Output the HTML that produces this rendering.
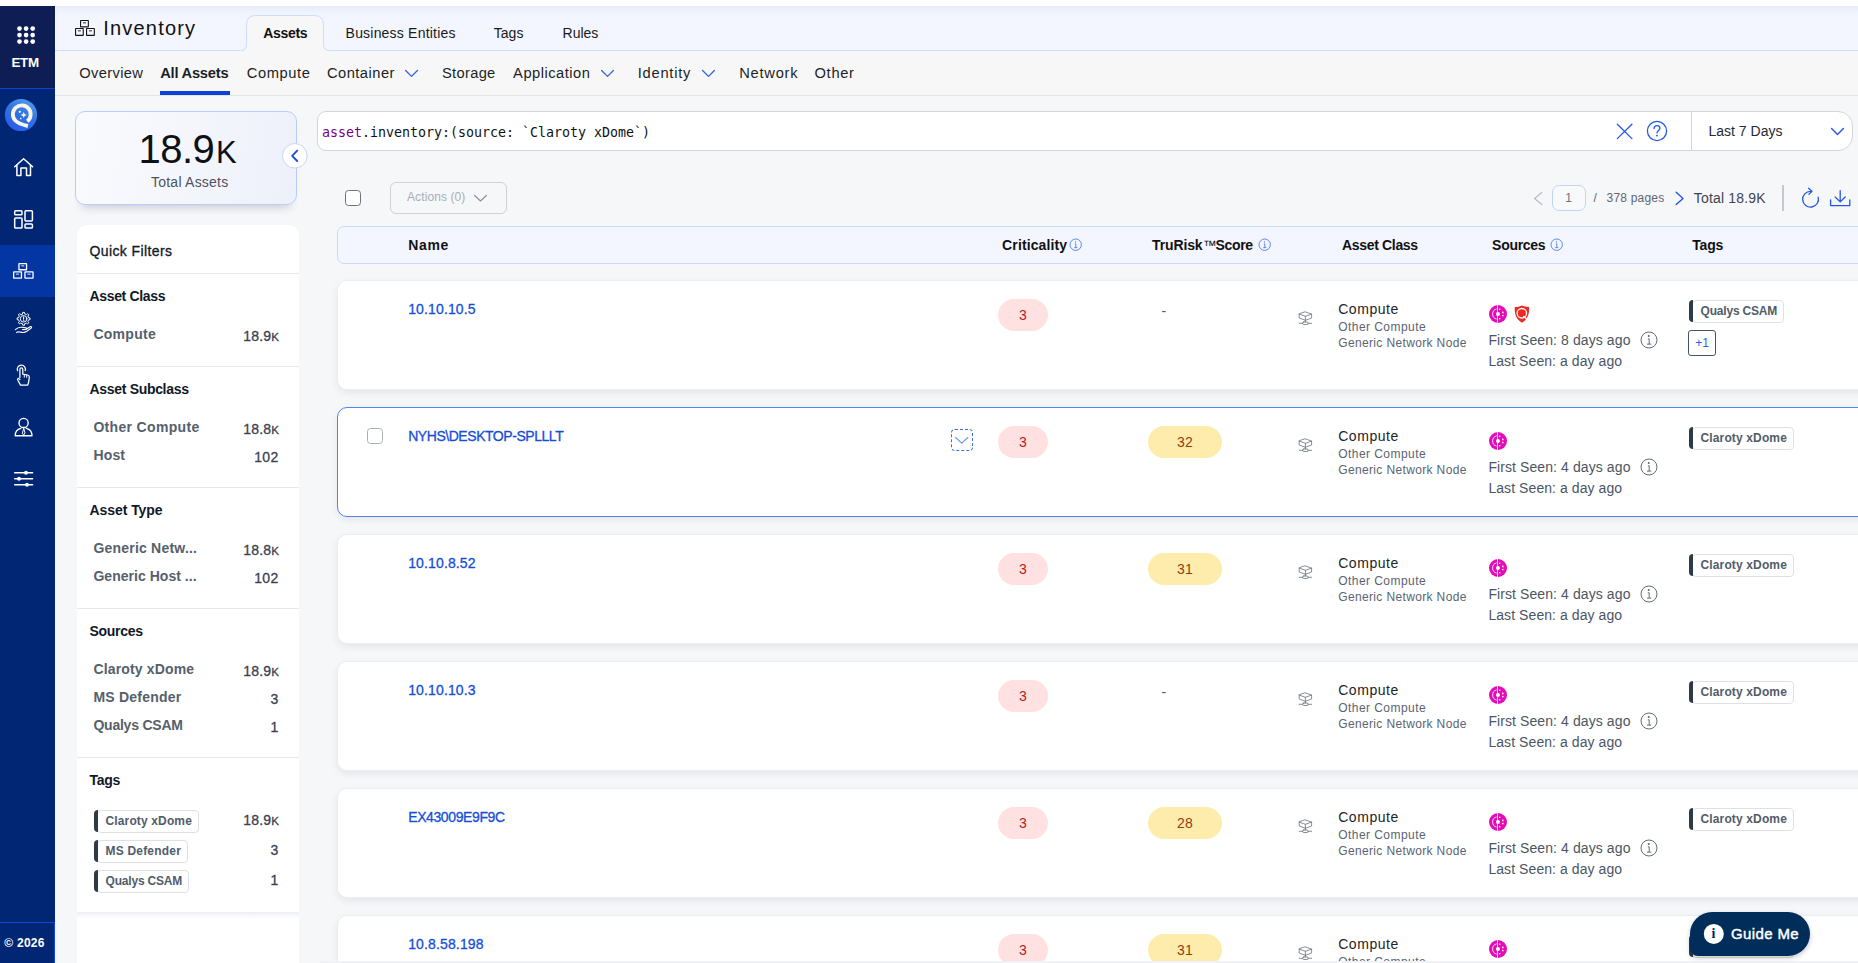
<!DOCTYPE html>
<html lang="en"><head><meta charset="utf-8"><title>Inventory - All Assets</title>
<style>
html,body{margin:0;padding:0}
body{width:1858px;height:963px;overflow:hidden;background:#f6f7f9;position:relative;font-family:'Liberation Sans', sans-serif}
#root{position:absolute;left:0;top:0;width:1858px;height:963px;overflow:hidden}
#root div,#root span,#root svg{box-sizing:border-box}
</style></head><body><div id="root">
<div style="position:absolute;left:0px;top:6px;width:55px;height:957px;background:#012674"></div>
<div style="position:absolute;left:0px;top:6px;width:55px;height:82px;background:#0e1e54"></div>
<div style="position:absolute;left:0px;top:88px;width:55px;height:1.1px;background:#0b42d4"></div>
<div style="position:absolute;left:0px;top:245px;width:55px;height:52px;background:#0335a3"></div>
<svg style="position:absolute;left:0px;top:0px;" width="55" height="60" viewBox="0 0 55 60" fill="none"><circle cx="19.5" cy="28.6" r="2.35" fill="#fff"/><circle cx="26.1" cy="28.6" r="2.35" fill="#fff"/><circle cx="32.7" cy="28.6" r="2.35" fill="#fff"/><circle cx="19.5" cy="35.1" r="2.35" fill="#fff"/><circle cx="26.1" cy="35.1" r="2.35" fill="#fff"/><circle cx="32.7" cy="35.1" r="2.35" fill="#fff"/><circle cx="19.5" cy="41.6" r="2.35" fill="#fff"/><circle cx="26.1" cy="41.6" r="2.35" fill="#fff"/><circle cx="32.7" cy="41.6" r="2.35" fill="#fff"/></svg>
<span style="position:absolute;left:11.43px;top:56.36px;font-family:'Liberation Sans', sans-serif;font-size:13.4px;line-height:13.4px;font-weight:700;color:#fff;letter-spacing:-0.245px;white-space:pre;">ETM</span>
<svg style="position:absolute;left:0px;top:95px;" width="55" height="40" viewBox="0 0 55 40" fill="none"><defs><linearGradient id="lg" x1="0.8" y1="0.05" x2="0.3" y2="1"><stop offset="0" stop-color="#4c9bf0"/><stop offset="0.45" stop-color="#3273e4"/><stop offset="1" stop-color="#2a5be9"/></linearGradient></defs><circle cx="21" cy="20" r="16.1" fill="url(#lg)"/><path d="M27.2 26.3 A8.9 8.9 0 1 0 15.4 25.5 C18.6 28.9 23.4 30.0 27.9 31.0" stroke="#f8f5e6" stroke-width="3.85" stroke-linecap="butt" fill="none"/><path d="M23.7 16.9 L24.6 19.1 L26.8 20 L24.6 20.9 L23.7 23.1 L22.8 20.9 L20.6 20 L22.8 19.1 Z" fill="#f8f5e6"/><circle cx="19.8" cy="16.8" r="1.15" fill="#f8f5e6"/><circle cx="20.7" cy="23.5" r="0.85" fill="#f8f5e6"/></svg>
<svg style="position:absolute;left:10px;top:154px;" width="30" height="26" viewBox="0 0 30 26" fill="none"><g stroke="#fff" stroke-width="1.5" stroke-linecap="round" stroke-linejoin="round"><path d="M4.7 12.7 L13.6 4.7 L22.6 12.7"/><path d="M6.9 11.2 V21.5 H10.9 V14.1 H16.5 V21.5 H20.5 V11.2"/></g></svg>
<svg style="position:absolute;left:10px;top:206px;" width="30" height="26" viewBox="0 0 30 26" fill="none"><g stroke="#fff" stroke-width="1.5"><rect x="4.7" y="4.8" width="7.3" height="4.0" rx="0.9"/><rect x="4.7" y="11.9" width="7.3" height="10.2" rx="0.9"/><rect x="15.0" y="4.8" width="7.4" height="10.2" rx="0.9"/><rect x="15.0" y="18.0" width="7.4" height="4.1" rx="0.9"/></g></svg>
<svg style="position:absolute;left:11.9px;top:262.0px;" width="24" height="19" viewBox="0 0 24 19" fill="none"><rect x="6.95" y="1.65" width="7.60" height="6.10" rx="0.3" stroke="#fff" stroke-width="1.3"/><path d="M9.25 3.85 h3.0" stroke="#fff" stroke-width="0.9"/><rect x="1.65" y="9.95" width="7.80" height="6.10" rx="0.3" stroke="#fff" stroke-width="1.3"/><path d="M4.05 12.15 h3.0" stroke="#fff" stroke-width="0.9"/><rect x="12.95" y="9.95" width="8.10" height="6.10" rx="0.3" stroke="#fff" stroke-width="1.3"/><path d="M15.50 12.15 h3.0" stroke="#fff" stroke-width="0.9"/></svg>
<svg style="position:absolute;left:10px;top:310px;" width="30" height="26" viewBox="0 0 30 26" fill="none"><g stroke="#fff" stroke-linecap="round" stroke-linejoin="round"><path d="M12.57 3.81 L12.73 2.36 L14.47 2.36 L14.63 3.81 L16.40 4.54 L17.54 3.63 L18.77 4.86 L17.86 6.00 L18.59 7.77 L20.04 7.93 L20.04 9.67 L18.59 9.83 L17.86 11.60 L18.77 12.74 L17.54 13.97 L16.40 13.06 L14.63 13.79 L14.47 15.24 L12.73 15.24 L12.57 13.79 L10.80 13.06 L9.66 13.97 L8.43 12.74 L9.34 11.60 L8.61 9.83 L7.16 9.67 L7.16 7.93 L8.61 7.77 L9.34 6.00 L8.43 4.86 L9.66 3.63 L10.80 4.54 Z" stroke-width="1.0"/><circle cx="13.6" cy="8.8" r="3.3" stroke-width="0.95"/><path d="M13.6 6.9 V9.3" stroke-width="1.1"/><circle cx="13.6" cy="10.8" r="0.3" stroke-width="0.6"/><path d="M5.4 19.6 C7.5 17.6 9.5 17.0 12.0 17.3 L16.0 17.9 C17.0 18.1 17.0 19.4 16.0 19.5 L12.6 19.6 M16.6 19.0 L20.4 16.6 C21.4 16.2 22.0 17.3 21.2 18.0 L16.4 21.6 C15.2 22.4 13.6 22.6 12.0 22.4 L8.2 21.8 L6.6 22.6" stroke-width="1.15"/></g></svg>
<svg style="position:absolute;left:10px;top:362px;" width="30" height="26" viewBox="0 0 30 26" fill="none"><g stroke="#fff" stroke-width="1.25" stroke-linecap="round" stroke-linejoin="round"><path d="M7.6 8.8 A4.1 4.1 0 1 1 15.2 8.6"/><path d="M9.9 15.6 V7.4 C9.9 5.5 12.8 5.5 12.8 7.4 V12.2 L17.6 13.0 C18.8 13.3 19.4 14.1 19.3 15.4 L18.6 20.2 C18.4 21.6 18.0 22.6 17.6 23.0 H10.4 C9.6 21.2 8.6 19.6 7.8 18.2 C7.1 16.8 8.4 15.8 9.2 16.8 L9.9 17.6"/><path d="M14.3 13.0 V15.2 M16.7 13.4 V15.4" stroke-width="1.0"/></g></svg>
<svg style="position:absolute;left:10px;top:414px;" width="30" height="26" viewBox="0 0 30 26" fill="none"><g stroke="#fff" stroke-width="1.35" stroke-linecap="round" stroke-linejoin="round"><circle cx="13.6" cy="8.9" r="4.6"/><path d="M5.2 21.7 C5.2 17.6 8.0 15.0 10.8 14.3 M16.4 14.3 C19.2 15.0 22.0 17.6 22.0 21.7 M5.2 21.7 H22.0"/><path d="M13.6 14.6 L12.4 19.2 L13.6 21.2 L14.8 19.2 Z" stroke-width="1.0"/></g></svg>
<svg style="position:absolute;left:10px;top:466px;" width="30" height="26" viewBox="0 0 30 26" fill="none"><g stroke="#fff" stroke-width="1.5" stroke-linecap="round"><path d="M4.7 6.7 H22.6 M4.7 12.7 H22.6 M4.7 18.7 H22.6"/></g><circle cx="16.0" cy="6.7" r="1.95" fill="#fff"/><circle cx="9.0" cy="12.7" r="1.95" fill="#fff"/><circle cx="17.0" cy="18.7" r="1.95" fill="#fff"/></svg>
<div style="position:absolute;left:0px;top:922px;width:55px;height:1px;background:#0b46e0"></div>
<div style="position:absolute;left:54px;top:922px;width:1px;height:41px;background:#0b46e0"></div>
<span style="position:absolute;left:4.20px;top:936.94px;font-family:'Liberation Sans', sans-serif;font-size:12px;line-height:12px;font-weight:700;color:#fff;letter-spacing:0.281px;white-space:pre;">© 2026</span>
<div style="position:absolute;left:55px;top:6px;width:1803px;height:45px;background:linear-gradient(to bottom,#e7ecf8 0,#f0f4fd 7px,#f3f6fe 14px,#f3f6fe 100%)"></div>
<div style="position:absolute;left:55px;top:51px;width:1803px;height:44.5px;background:#f7f7f8"></div>
<div style="position:absolute;left:55px;top:95px;width:1803px;height:1px;background:#e1e4e9"></div>
<svg style="position:absolute;left:55px;top:6px;" width="1803" height="50" viewBox="0 0 1803 50" fill="none"><path d="M0 44.5 H185.5 Q191.5 44.5 191.5 38.5 V19 Q191.5 9.5 201 9.5 H259 Q268.5 9.5 268.5 19 V38.5 Q268.5 44.5 274.5 44.5 H1803 V50 H0 Z" fill="#f7f7f8"/><path d="M0 44.5 H185.5 Q191.5 44.5 191.5 38.5 V19 Q191.5 9.5 201 9.5 H259 Q268.5 9.5 268.5 19 V38.5 Q268.5 44.5 274.5 44.5 H1803" stroke="#cfdcfc" stroke-width="1"/></svg>
<svg style="position:absolute;left:74.1px;top:19.0px;" width="24" height="19" viewBox="0 0 24 19" fill="none"><rect x="6.55" y="1.55" width="7.80" height="6.30" rx="0.3" stroke="#141414" stroke-width="1.1"/><path d="M8.95 3.85 h3.0" stroke="#141414" stroke-width="0.9"/><rect x="1.55" y="9.55" width="7.70" height="6.80" rx="0.3" stroke="#141414" stroke-width="1.1"/><path d="M3.90 11.85 h3.0" stroke="#141414" stroke-width="0.9"/><rect x="12.55" y="9.55" width="7.80" height="6.80" rx="0.3" stroke="#141414" stroke-width="1.1"/><path d="M14.95 11.85 h3.0" stroke="#141414" stroke-width="0.9"/></svg>
<span style="position:absolute;left:103.30px;top:17.97px;font-family:'Liberation Sans', sans-serif;font-size:20px;line-height:20px;font-weight:400;color:#111;letter-spacing:1.193px;white-space:pre;">Inventory</span>
<span style="position:absolute;left:263.20px;top:26.15px;font-family:'Liberation Sans', sans-serif;font-size:14px;line-height:14px;font-weight:700;color:#111;letter-spacing:-0.320px;white-space:pre;">Assets</span>
<span style="position:absolute;left:345.60px;top:26.25px;font-family:'Liberation Sans', sans-serif;font-size:14px;line-height:14px;font-weight:400;color:#1a1a1a;letter-spacing:0.202px;white-space:pre;">Business Entities</span>
<span style="position:absolute;left:493.70px;top:26.25px;font-family:'Liberation Sans', sans-serif;font-size:14px;line-height:14px;font-weight:400;color:#1a1a1a;letter-spacing:0.066px;white-space:pre;">Tags</span>
<span style="position:absolute;left:562.60px;top:26.25px;font-family:'Liberation Sans', sans-serif;font-size:14px;line-height:14px;font-weight:400;color:#1a1a1a;letter-spacing:-0.044px;white-space:pre;">Rules</span>
<span style="position:absolute;left:79.20px;top:65.56px;font-family:'Liberation Sans', sans-serif;font-size:14.7px;line-height:14.7px;font-weight:400;color:#1c1f24;letter-spacing:0.357px;white-space:pre;">Overview</span>
<span style="position:absolute;left:160.20px;top:65.56px;font-family:'Liberation Sans', sans-serif;font-size:14.7px;line-height:14.7px;font-weight:700;color:#1c1f24;letter-spacing:-0.233px;white-space:pre;">All Assets</span>
<span style="position:absolute;left:246.80px;top:65.56px;font-family:'Liberation Sans', sans-serif;font-size:14.7px;line-height:14.7px;font-weight:400;color:#1c1f24;letter-spacing:0.571px;white-space:pre;">Compute</span>
<span style="position:absolute;left:326.90px;top:65.56px;font-family:'Liberation Sans', sans-serif;font-size:14.7px;line-height:14.7px;font-weight:400;color:#1c1f24;letter-spacing:0.481px;white-space:pre;">Container</span>
<span style="position:absolute;left:442.00px;top:65.56px;font-family:'Liberation Sans', sans-serif;font-size:14.7px;line-height:14.7px;font-weight:400;color:#1c1f24;letter-spacing:0.306px;white-space:pre;">Storage</span>
<span style="position:absolute;left:513.10px;top:65.56px;font-family:'Liberation Sans', sans-serif;font-size:14.7px;line-height:14.7px;font-weight:400;color:#1c1f24;letter-spacing:0.501px;white-space:pre;">Application</span>
<span style="position:absolute;left:637.80px;top:65.56px;font-family:'Liberation Sans', sans-serif;font-size:14.7px;line-height:14.7px;font-weight:400;color:#1c1f24;letter-spacing:0.738px;white-space:pre;">Identity</span>
<span style="position:absolute;left:739.20px;top:65.56px;font-family:'Liberation Sans', sans-serif;font-size:14.7px;line-height:14.7px;font-weight:400;color:#1c1f24;letter-spacing:0.746px;white-space:pre;">Network</span>
<span style="position:absolute;left:814.50px;top:65.56px;font-family:'Liberation Sans', sans-serif;font-size:14.7px;line-height:14.7px;font-weight:400;color:#1c1f24;letter-spacing:0.694px;white-space:pre;">Other</span>
<svg style="position:absolute;left:404.8px;top:69px;" width="13" height="9" viewBox="0 0 13 9" fill="none"><path d="M0.6 1.5 L6.5 7.4 L12.4 1.5" stroke="#2f62e6" stroke-width="1.3" stroke-linecap="round" stroke-linejoin="round"/></svg>
<svg style="position:absolute;left:600.7px;top:69px;" width="13" height="9" viewBox="0 0 13 9" fill="none"><path d="M0.6 1.5 L6.5 7.4 L12.4 1.5" stroke="#2f62e6" stroke-width="1.3" stroke-linecap="round" stroke-linejoin="round"/></svg>
<svg style="position:absolute;left:701.6px;top:69px;" width="13" height="9" viewBox="0 0 13 9" fill="none"><path d="M0.6 1.5 L6.5 7.4 L12.4 1.5" stroke="#2f62e6" stroke-width="1.3" stroke-linecap="round" stroke-linejoin="round"/></svg>
<div style="position:absolute;left:160px;top:91px;width:70px;height:4px;background:#0b43d8"></div>
<div style="position:absolute;left:75.0px;top:111.0px;width:222px;height:93.8px;border:1px solid #b9cdfb;border-radius:10px;background:linear-gradient(100deg,#f9fafd 0%,#f4f6fc 50%,#edf0fa 100%);box-shadow:0 9px 10px -7px rgba(20,30,60,.22)"></div>
<span style="position:absolute;left:138.60px;top:129.44px;font-family:'Liberation Sans', sans-serif;font-size:40px;line-height:40px;font-weight:400;color:#0d1117;letter-spacing:-0.565px;white-space:pre;">18.9</span>
<span style="position:absolute;left:216.00px;top:137.06px;font-family:'Liberation Sans', sans-serif;font-size:31px;line-height:31px;font-weight:400;color:#0d1117;letter-spacing:-1.484px;white-space:pre;">K</span>
<span style="position:absolute;left:151.00px;top:174.95px;font-family:'Liberation Sans', sans-serif;font-size:14px;line-height:14px;font-weight:400;color:#4d535c;letter-spacing:0.229px;white-space:pre;">Total Assets</span>
<svg style="position:absolute;left:281px;top:142px;" width="28" height="28" viewBox="0 0 28 28" fill="none"><circle cx="13.8" cy="13.8" r="12.3" fill="#fff" stroke="#c6d6fb" stroke-width="1"/><path d="M16.2 8.6 L11.2 13.8 L16.2 19" stroke="#1d4ed8" stroke-width="1.9" stroke-linecap="round" stroke-linejoin="round"/></svg>
<div style="position:absolute;left:77px;top:225px;width:222px;height:738px;background:#fff;border-radius:10px 10px 0 0"></div>
<span style="position:absolute;left:89.50px;top:244.05px;font-family:'Liberation Sans', sans-serif;font-size:14px;line-height:14px;font-weight:400;color:#111827;letter-spacing:0.397px;white-space:pre;-webkit-text-stroke:0.3px;">Quick Filters</span>
<div style="position:absolute;left:77px;top:273px;width:222px;height:1px;background:#e6e8ec"></div>
<div style="position:absolute;left:77px;top:366px;width:222px;height:1px;background:#e6e8ec"></div>
<div style="position:absolute;left:77px;top:487px;width:222px;height:1px;background:#e6e8ec"></div>
<div style="position:absolute;left:77px;top:608px;width:222px;height:1px;background:#e6e8ec"></div>
<div style="position:absolute;left:77px;top:757px;width:222px;height:1px;background:#e6e8ec"></div>
<div style="position:absolute;left:77px;top:912px;width:222px;height:7px;background:linear-gradient(to bottom,#eceef1,#fafafb 60%,#fff)"></div>
<span style="position:absolute;left:89.50px;top:288.65px;font-family:'Liberation Sans', sans-serif;font-size:14px;line-height:14px;font-weight:700;color:#111827;letter-spacing:-0.342px;white-space:pre;">Asset Class</span>
<span style="position:absolute;left:93.40px;top:326.85px;font-family:'Liberation Sans', sans-serif;font-size:14px;line-height:14px;font-weight:700;color:#56606c;letter-spacing:0.275px;white-space:pre;">Compute</span>
<span style="position:absolute;left:271.27px;top:330.78px;font-family:'Liberation Sans', sans-serif;font-size:11.6px;line-height:11.6px;font-weight:400;color:#3a4150;letter-spacing:-0.406px;white-space:pre;-webkit-text-stroke:0.3px;">K</span>
<span style="position:absolute;left:243.36px;top:328.75px;font-family:'Liberation Sans', sans-serif;font-size:14px;line-height:14px;font-weight:400;color:#3a4150;letter-spacing:0.148px;white-space:pre;-webkit-text-stroke:0.3px;">18.9</span>
<span style="position:absolute;left:89.50px;top:381.65px;font-family:'Liberation Sans', sans-serif;font-size:14px;line-height:14px;font-weight:700;color:#111827;letter-spacing:-0.314px;white-space:pre;">Asset Subclass</span>
<span style="position:absolute;left:93.40px;top:419.85px;font-family:'Liberation Sans', sans-serif;font-size:14px;line-height:14px;font-weight:700;color:#56606c;letter-spacing:0.326px;white-space:pre;">Other Compute</span>
<span style="position:absolute;left:271.27px;top:423.78px;font-family:'Liberation Sans', sans-serif;font-size:11.6px;line-height:11.6px;font-weight:400;color:#3a4150;letter-spacing:-0.406px;white-space:pre;-webkit-text-stroke:0.3px;">K</span>
<span style="position:absolute;left:243.36px;top:421.75px;font-family:'Liberation Sans', sans-serif;font-size:14px;line-height:14px;font-weight:400;color:#3a4150;letter-spacing:0.148px;white-space:pre;-webkit-text-stroke:0.3px;">18.8</span>
<span style="position:absolute;left:93.40px;top:447.95px;font-family:'Liberation Sans', sans-serif;font-size:14px;line-height:14px;font-weight:700;color:#56606c;letter-spacing:0.172px;white-space:pre;">Host</span>
<span style="position:absolute;left:254.37px;top:449.85px;font-family:'Liberation Sans', sans-serif;font-size:14px;line-height:14px;font-weight:400;color:#3a4150;letter-spacing:0.224px;white-space:pre;-webkit-text-stroke:0.3px;">102</span>
<span style="position:absolute;left:89.50px;top:502.65px;font-family:'Liberation Sans', sans-serif;font-size:14px;line-height:14px;font-weight:700;color:#111827;letter-spacing:-0.062px;white-space:pre;">Asset Type</span>
<span style="position:absolute;left:93.40px;top:540.85px;font-family:'Liberation Sans', sans-serif;font-size:14px;line-height:14px;font-weight:700;color:#56606c;letter-spacing:0.212px;white-space:pre;">Generic Netw...</span>
<span style="position:absolute;left:271.27px;top:544.78px;font-family:'Liberation Sans', sans-serif;font-size:11.6px;line-height:11.6px;font-weight:400;color:#3a4150;letter-spacing:-0.406px;white-space:pre;-webkit-text-stroke:0.3px;">K</span>
<span style="position:absolute;left:243.36px;top:542.75px;font-family:'Liberation Sans', sans-serif;font-size:14px;line-height:14px;font-weight:400;color:#3a4150;letter-spacing:0.148px;white-space:pre;-webkit-text-stroke:0.3px;">18.8</span>
<span style="position:absolute;left:93.40px;top:568.95px;font-family:'Liberation Sans', sans-serif;font-size:14px;line-height:14px;font-weight:700;color:#56606c;letter-spacing:0.033px;white-space:pre;">Generic Host ...</span>
<span style="position:absolute;left:254.37px;top:570.85px;font-family:'Liberation Sans', sans-serif;font-size:14px;line-height:14px;font-weight:400;color:#3a4150;letter-spacing:0.224px;white-space:pre;-webkit-text-stroke:0.3px;">102</span>
<span style="position:absolute;left:89.50px;top:623.65px;font-family:'Liberation Sans', sans-serif;font-size:14px;line-height:14px;font-weight:700;color:#111827;letter-spacing:-0.295px;white-space:pre;">Sources</span>
<span style="position:absolute;left:93.40px;top:661.85px;font-family:'Liberation Sans', sans-serif;font-size:14px;line-height:14px;font-weight:700;color:#56606c;letter-spacing:0.159px;white-space:pre;">Claroty xDome</span>
<span style="position:absolute;left:271.27px;top:665.78px;font-family:'Liberation Sans', sans-serif;font-size:11.6px;line-height:11.6px;font-weight:400;color:#3a4150;letter-spacing:-0.406px;white-space:pre;-webkit-text-stroke:0.3px;">K</span>
<span style="position:absolute;left:243.36px;top:663.75px;font-family:'Liberation Sans', sans-serif;font-size:14px;line-height:14px;font-weight:400;color:#3a4150;letter-spacing:0.148px;white-space:pre;-webkit-text-stroke:0.3px;">18.9</span>
<span style="position:absolute;left:93.40px;top:689.95px;font-family:'Liberation Sans', sans-serif;font-size:14px;line-height:14px;font-weight:700;color:#56606c;letter-spacing:0.233px;white-space:pre;">MS Defender</span>
<span style="position:absolute;left:270.38px;top:691.85px;font-family:'Liberation Sans', sans-serif;font-size:14px;line-height:14px;font-weight:400;color:#3a4150;letter-spacing:0.219px;white-space:pre;-webkit-text-stroke:0.3px;">3</span>
<span style="position:absolute;left:93.40px;top:718.05px;font-family:'Liberation Sans', sans-serif;font-size:14px;line-height:14px;font-weight:700;color:#56606c;letter-spacing:-0.222px;white-space:pre;">Qualys CSAM</span>
<span style="position:absolute;left:270.38px;top:719.95px;font-family:'Liberation Sans', sans-serif;font-size:14px;line-height:14px;font-weight:400;color:#3a4150;letter-spacing:0.219px;white-space:pre;-webkit-text-stroke:0.3px;">1</span>
<span style="position:absolute;left:89.40px;top:772.85px;font-family:'Liberation Sans', sans-serif;font-size:14px;line-height:14px;font-weight:700;color:#111827;letter-spacing:-0.234px;white-space:pre;">Tags</span>
<div style="position:absolute;left:97.0px;top:810.0999999999999px;width:102.10000000000001px;height:23.2px;border:1px solid #dde1e6;border-radius:4px;background:#fff"></div>
<div style="position:absolute;left:93.7px;top:809.8px;width:4.4px;height:22.2px;background:#2e3b47;border-radius:4px 0 0 4px"></div>
<span style="position:absolute;left:105.50px;top:814.64px;font-family:'Liberation Sans', sans-serif;font-size:12px;line-height:12px;font-weight:700;color:#525c69;letter-spacing:0.136px;white-space:pre;">Claroty xDome</span>
<span style="position:absolute;left:271.27px;top:814.98px;font-family:'Liberation Sans', sans-serif;font-size:11.6px;line-height:11.6px;font-weight:400;color:#3a4150;letter-spacing:-0.406px;white-space:pre;-webkit-text-stroke:0.3px;">K</span>
<span style="position:absolute;left:243.36px;top:812.95px;font-family:'Liberation Sans', sans-serif;font-size:14px;line-height:14px;font-weight:400;color:#3a4150;letter-spacing:0.148px;white-space:pre;-webkit-text-stroke:0.3px;">18.9</span>
<div style="position:absolute;left:97.0px;top:840.1999999999999px;width:90.80000000000001px;height:23.2px;border:1px solid #dde1e6;border-radius:4px;background:#fff"></div>
<div style="position:absolute;left:93.7px;top:839.9px;width:4.4px;height:22.2px;background:#2e3b47;border-radius:4px 0 0 4px"></div>
<span style="position:absolute;left:105.50px;top:844.74px;font-family:'Liberation Sans', sans-serif;font-size:12px;line-height:12px;font-weight:700;color:#525c69;letter-spacing:0.199px;white-space:pre;">MS Defender</span>
<span style="position:absolute;left:270.38px;top:843.05px;font-family:'Liberation Sans', sans-serif;font-size:14px;line-height:14px;font-weight:400;color:#3a4150;letter-spacing:0.219px;white-space:pre;-webkit-text-stroke:0.3px;">3</span>
<div style="position:absolute;left:97.0px;top:870.3px;width:91.60000000000001px;height:23.2px;border:1px solid #dde1e6;border-radius:4px;background:#fff"></div>
<div style="position:absolute;left:93.7px;top:870.0px;width:4.4px;height:22.2px;background:#2e3b47;border-radius:4px 0 0 4px"></div>
<span style="position:absolute;left:105.50px;top:874.84px;font-family:'Liberation Sans', sans-serif;font-size:12px;line-height:12px;font-weight:700;color:#525c69;letter-spacing:-0.189px;white-space:pre;">Qualys CSAM</span>
<span style="position:absolute;left:270.38px;top:873.15px;font-family:'Liberation Sans', sans-serif;font-size:14px;line-height:14px;font-weight:400;color:#3a4150;letter-spacing:0.219px;white-space:pre;-webkit-text-stroke:0.3px;">1</span>
<div style="position:absolute;left:317.0px;top:111.0px;width:1536px;height:39.8px;background:#fff;border:1px solid #d2d6dd;border-radius:9px 15px 15px 9px"></div>
<div style="position:absolute;left:1691px;top:111.5px;width:1px;height:38.8px;background:#d2d6dd"></div>
<span style="position:absolute;left:321.90px;top:125.56px;font-family:'DejaVu Sans Mono', 'Liberation Mono', monospace;font-size:13.3px;line-height:13.3px;font-weight:400;color:#111;letter-spacing:0.000px;white-space:pre;"><span style="color:#770088">asset</span>.inventory:(source: `Claroty xDome`)</span>
<svg style="position:absolute;left:1616px;top:123px;" width="17" height="17" viewBox="0 0 17 17" fill="none"><path d="M1.3 1.2 L15.9 15.6 M15.9 1.2 L1.3 15.6" stroke="#2457e6" stroke-width="1.3" stroke-linecap="round"/></svg>
<svg style="position:absolute;left:1646px;top:120px;" width="22" height="22" viewBox="0 0 22 22" fill="none"><circle cx="11" cy="11" r="9.6" stroke="#2457e6" stroke-width="1.25"/><path d="M8.1 8.6 C8.1 6.6 9.4 5.7 11 5.7 C12.7 5.7 13.9 6.7 13.9 8.2 C13.9 10.4 11 10.5 11 12.9" stroke="#2457e6" stroke-width="1.3" stroke-linecap="round"/><circle cx="11" cy="15.6" r="0.95" fill="#2457e6"/></svg>
<span style="position:absolute;left:1708.40px;top:123.75px;font-family:'Liberation Sans', sans-serif;font-size:14px;line-height:14px;font-weight:400;color:#1f2937;letter-spacing:0.021px;white-space:pre;">Last 7 Days</span>
<svg style="position:absolute;left:1830.9px;top:126.8px;" width="13" height="9" viewBox="0 0 13 9" fill="none"><path d="M0.6 1.5 L6.5 7.4 L12.4 1.5" stroke="#2457e6" stroke-width="1.4" stroke-linecap="round" stroke-linejoin="round"/></svg>
<div style="position:absolute;left:345px;top:190px;width:16px;height:16px;background:#fff;border:1px solid #6b7483;border-radius:3.5px"></div>
<div style="position:absolute;left:390px;top:182px;width:117px;height:31.7px;border:1px solid #cdd1d8;border-radius:6px"></div>
<span style="position:absolute;left:407.00px;top:191.04px;font-family:'Liberation Sans', sans-serif;font-size:12px;line-height:12px;font-weight:400;color:#a8aeb7;letter-spacing:0.101px;white-space:pre;">Actions (0)</span>
<svg style="position:absolute;left:474.0px;top:193.6px;" width="13" height="8.6" viewBox="0 0 13 8.6" fill="none"><path d="M0.6 1.5 L6.5 7.0 L12.4 1.5" stroke="#8b919b" stroke-width="1.2" stroke-linecap="round" stroke-linejoin="round"/></svg>
<svg style="position:absolute;left:1532px;top:190px;" width="12" height="17" viewBox="0 0 12 17" fill="none"><path d="M9.8 2.4 L2.6 8.5 L9.8 14.6" stroke="#b9bec8" stroke-width="1.3" stroke-linecap="round" stroke-linejoin="round"/></svg>
<div style="position:absolute;left:1552px;top:185px;width:34px;height:25.8px;border:1px solid #c3d3fb;border-radius:7px;background:#f8f9fb"></div>
<span style="position:absolute;left:1565.36px;top:191.84px;font-family:'Liberation Sans', sans-serif;font-size:12px;line-height:12px;font-weight:400;color:#6b7280;letter-spacing:0.188px;white-space:pre;">1</span>
<span style="position:absolute;left:1593.60px;top:191.84px;font-family:'Liberation Sans', sans-serif;font-size:12px;line-height:12px;font-weight:400;color:#5f6673;letter-spacing:1.125px;white-space:pre;">/</span>
<span style="position:absolute;left:1606.60px;top:191.84px;font-family:'Liberation Sans', sans-serif;font-size:12px;line-height:12px;font-weight:400;color:#5f6673;letter-spacing:0.186px;white-space:pre;">378 pages</span>
<svg style="position:absolute;left:1674px;top:190px;" width="12" height="17" viewBox="0 0 12 17" fill="none"><path d="M2.2 2.2 L9 8.4 L2.2 14.6" stroke="#2457e6" stroke-width="1.4" stroke-linecap="round" stroke-linejoin="round"/></svg>
<span style="position:absolute;left:1693.80px;top:191.05px;font-family:'Liberation Sans', sans-serif;font-size:14px;line-height:14px;font-weight:400;color:#3f4550;letter-spacing:0.166px;white-space:pre;">Total 18.9K</span>
<div style="position:absolute;left:1782.2px;top:185px;width:1.6px;height:26px;background:#c4c8d0"></div>
<svg style="position:absolute;left:1800px;top:187px;" width="21" height="22" viewBox="0 0 21 22" fill="none"><path d="M10.6 4.3 A7.9 7.9 0 1 0 18.2 10.2" stroke="#2457e6" stroke-width="1.3" stroke-linecap="round"/><path d="M8.6 1.3 L12.0 4.2 L8.9 7.4" stroke="#2457e6" stroke-width="1.3" stroke-linecap="round" stroke-linejoin="round"/></svg>
<svg style="position:absolute;left:1829px;top:189px;" width="23" height="19" viewBox="0 0 23 19" fill="none"><path d="M1.6 10.8 V16.6 H20.8 V10.8" stroke="#2457e6" stroke-width="1.3" stroke-linejoin="round" stroke-linecap="round"/><path d="M11.2 1.6 V12.6 M6.2 8.0 L11.2 12.9 L16.2 8.0" stroke="#2457e6" stroke-width="1.3" stroke-linecap="round" stroke-linejoin="round"/></svg>
<div style="position:absolute;left:337px;top:226.3px;width:1540px;height:37.6px;background:#f3f6fe;border:1px solid #cbd9fb;border-radius:7px"></div>
<span style="position:absolute;left:408.20px;top:238.15px;font-family:'Liberation Sans', sans-serif;font-size:14px;line-height:14px;font-weight:700;color:#111;letter-spacing:0.695px;white-space:pre;">Name</span>
<span style="position:absolute;left:1002.10px;top:238.15px;font-family:'Liberation Sans', sans-serif;font-size:14px;line-height:14px;font-weight:700;color:#111;letter-spacing:0.119px;white-space:pre;">Criticality</span>
<svg style="position:absolute;left:1069.3px;top:238.3px;" width="13.4" height="13.4" viewBox="0 0 13.4 13.4" fill="none"><circle cx="6.7" cy="6.7" r="5.7" stroke="#3b6fe8" stroke-width="0.8"/><path d="M5.85 5.85 H6.84 V9.55 M5.28 9.64 H8.31" stroke="#3b6fe8" stroke-width="0.8"/><circle cx="6.51" cy="3.85" r="0.71" fill="#3b6fe8"/></svg>
<span style="position:absolute;left:1152.10px;top:238.15px;font-family:'Liberation Sans', sans-serif;font-size:14px;line-height:14px;font-weight:700;color:#111;letter-spacing:-0.141px;white-space:pre;">TruRisk</span>
<span style="position:absolute;left:1203.20px;top:238.89px;font-family:'Liberation Sans', sans-serif;font-size:13.6px;line-height:13.6px;font-weight:400;color:#111;letter-spacing:-0.594px;white-space:pre;">™</span>
<span style="position:absolute;left:1215.40px;top:238.15px;font-family:'Liberation Sans', sans-serif;font-size:14px;line-height:14px;font-weight:700;color:#111;letter-spacing:-0.312px;white-space:pre;">Score</span>
<svg style="position:absolute;left:1257.8999999999999px;top:238.3px;" width="13.4" height="13.4" viewBox="0 0 13.4 13.4" fill="none"><circle cx="6.7" cy="6.7" r="5.7" stroke="#3b6fe8" stroke-width="0.8"/><path d="M5.85 5.85 H6.84 V9.55 M5.28 9.64 H8.31" stroke="#3b6fe8" stroke-width="0.8"/><circle cx="6.51" cy="3.85" r="0.71" fill="#3b6fe8"/></svg>
<span style="position:absolute;left:1342.10px;top:238.15px;font-family:'Liberation Sans', sans-serif;font-size:14px;line-height:14px;font-weight:700;color:#111;letter-spacing:-0.342px;white-space:pre;">Asset Class</span>
<span style="position:absolute;left:1492.10px;top:238.15px;font-family:'Liberation Sans', sans-serif;font-size:14px;line-height:14px;font-weight:700;color:#111;letter-spacing:-0.295px;white-space:pre;">Sources</span>
<svg style="position:absolute;left:1549.5px;top:238.3px;" width="13.4" height="13.4" viewBox="0 0 13.4 13.4" fill="none"><circle cx="6.7" cy="6.7" r="5.7" stroke="#3b6fe8" stroke-width="0.8"/><path d="M5.85 5.85 H6.84 V9.55 M5.28 9.64 H8.31" stroke="#3b6fe8" stroke-width="0.8"/><circle cx="6.51" cy="3.85" r="0.71" fill="#3b6fe8"/></svg>
<span style="position:absolute;left:1692.30px;top:238.15px;font-family:'Liberation Sans', sans-serif;font-size:14px;line-height:14px;font-weight:700;color:#111;letter-spacing:-0.234px;white-space:pre;">Tags</span>
<div style="position:absolute;left:337px;top:280px;width:1540px;height:110px;background:#fff;border:1px solid #eceef1;border-radius:10px;box-shadow:0 3px 8px -1px rgba(16,24,40,.09)"></div>
<span style="position:absolute;left:408.20px;top:302.15px;font-family:'Liberation Sans', sans-serif;font-size:14px;line-height:14px;font-weight:400;color:#164ed8;letter-spacing:0.131px;white-space:pre;-webkit-text-stroke:0.3px;">10.10.10.5</span>
<div style="position:absolute;left:998px;top:299px;width:50px;height:32px;background:#ffe1e1;border-radius:16px"></div>
<span style="position:absolute;left:1018.99px;top:308.15px;font-family:'Liberation Sans', sans-serif;font-size:14px;line-height:14px;font-weight:400;color:#b42318;letter-spacing:0.219px;white-space:pre;">3</span>
<span style="position:absolute;left:1161.60px;top:303.75px;font-family:'Liberation Sans', sans-serif;font-size:14px;line-height:14px;font-weight:400;color:#555;letter-spacing:-0.156px;white-space:pre;">-</span>
<svg style="position:absolute;left:1297.5px;top:311.2px;" width="15" height="15" viewBox="0 0 15 15" fill="none"><g stroke="#69717d" stroke-width="0.8" stroke-linejoin="round" stroke-linecap="round"><path d="M7.4 0.9 L13.6 3.1 V7.0 L7.4 9.3 L1.2 7.0 V3.1 Z"/><path d="M1.2 3.1 L7.4 5.3 L13.6 3.1 M7.4 5.3 V9.3"/><path d="M7.4 9.3 V11.0"/><rect x="4.6" y="11.0" width="5.6" height="2.5" rx="1.2"/><path d="M1.2 12.3 H4.6 M10.2 12.3 H13.6"/></g></svg>
<span style="position:absolute;left:1338.20px;top:302.15px;font-family:'Liberation Sans', sans-serif;font-size:14px;line-height:14px;font-weight:400;color:#1f2328;letter-spacing:0.545px;white-space:pre;">Compute</span>
<span style="position:absolute;left:1338.20px;top:320.74px;font-family:'Liberation Sans', sans-serif;font-size:12px;line-height:12px;font-weight:400;color:#5b6470;letter-spacing:0.453px;white-space:pre;">Other Compute</span>
<span style="position:absolute;left:1338.20px;top:336.84px;font-family:'Liberation Sans', sans-serif;font-size:12px;line-height:12px;font-weight:400;color:#5b6470;letter-spacing:0.358px;white-space:pre;">Generic Network Node</span>
<svg style="position:absolute;left:1488px;top:304px;" width="20" height="20" viewBox="0 0 20 20" fill="none"><circle cx="10" cy="10" r="9" fill="#e30db8"/><path d="M8.6 4.9 A5.25 5.25 0 0 0 8.6 15.1" stroke="#fff" stroke-width="0.95" opacity=".85"/><rect x="9.05" y="0.5" width="0.8" height="19" fill="#fff"/><circle cx="9.95" cy="9.95" r="2.0" fill="#fff"/><circle cx="11.7" cy="5.3" r="0.8" fill="#fff"/><circle cx="14.8" cy="8.4" r="0.85" fill="#fff"/><circle cx="14.8" cy="11.5" r="0.85" fill="#fff"/><circle cx="11.7" cy="14.7" r="0.8" fill="#fff"/></svg>
<svg style="position:absolute;left:1514.4px;top:305.40000000000003px;" width="16" height="19" viewBox="0 0 16 19" fill="none"><path d="M7.9 0.4 C5.5 1.5 3 2.0 0.8 2.1 C0.4 7.4 1.2 13.6 7.9 17.8 C14.6 13.6 15.4 7.4 15.0 2.1 C12.8 2.0 10.3 1.5 7.9 0.4 Z" fill="#ec2b24"/><circle cx="7.85" cy="8.25" r="4.75" stroke="#fff" stroke-width="1.3"/><path d="M9.8 11.4 L12.0 13.4" stroke="#fff" stroke-width="1.4" stroke-linecap="round"/></svg>
<span style="position:absolute;left:1488.40px;top:333.15px;font-family:'Liberation Sans', sans-serif;font-size:14px;line-height:14px;font-weight:400;color:#4b5563;letter-spacing:0.093px;white-space:pre;">First Seen: 8 days ago</span>
<svg style="position:absolute;left:1640.4px;top:331.1px;" width="18" height="18" viewBox="0 0 18 18" fill="none"><circle cx="9" cy="9" r="8" stroke="#5b6470" stroke-width="0.95"/><path d="M7.80 7.80 H9.20 V13.00 M7.00 13.13 H11.27" stroke="#5b6470" stroke-width="0.95"/><circle cx="8.73" cy="5.00" r="1.00" fill="#5b6470"/></svg>
<span style="position:absolute;left:1488.40px;top:353.85px;font-family:'Liberation Sans', sans-serif;font-size:14px;line-height:14px;font-weight:400;color:#4b5563;letter-spacing:0.073px;white-space:pre;">Last Seen: a day ago</span>
<div style="position:absolute;left:1692.0px;top:300.1px;width:91.60000000000001px;height:23.2px;border:1px solid #dde1e6;border-radius:4px;background:#fff"></div>
<div style="position:absolute;left:1688.7px;top:299.8px;width:4.4px;height:22.2px;background:#2e3b47;border-radius:4px 0 0 4px"></div>
<span style="position:absolute;left:1700.50px;top:304.64px;font-family:'Liberation Sans', sans-serif;font-size:12px;line-height:12px;font-weight:700;color:#525c69;letter-spacing:-0.189px;white-space:pre;">Qualys CSAM</span>
<div style="position:absolute;left:1688.2px;top:330.2px;width:27.5px;height:25.5px;border:1px solid #46546b;border-radius:3px;background:#fff"></div>
<span style="position:absolute;left:1695.20px;top:336.74px;font-family:'Liberation Sans', sans-serif;font-size:12px;line-height:12px;font-weight:400;color:#2563eb;letter-spacing:0.023px;white-space:pre;">+1</span>
<div style="position:absolute;left:337px;top:407px;width:1540px;height:110px;background:#fff;border:1px solid #5583f5;border-radius:10px;box-shadow:0 3px 8px -1px rgba(16,24,40,.09)"></div>
<div style="position:absolute;left:367px;top:428px;width:16px;height:16px;background:#fff;border:1px solid #a7afbb;border-radius:3.5px"></div>
<div style="position:absolute;left:951px;top:429px;width:22px;height:22px;border:1px dashed #3b6fe0;border-radius:4px"></div>
<svg style="position:absolute;left:955.3px;top:436px;" width="13.4" height="8.8" viewBox="0 0 13.4 8.8" fill="none"><path d="M0.6 1.5 L6.7 7.2 L12.8 1.5" stroke="#6b93ee" stroke-width="1.1" stroke-linecap="round" stroke-linejoin="round"/></svg>
<span style="position:absolute;left:408.20px;top:429.15px;font-family:'Liberation Sans', sans-serif;font-size:14px;line-height:14px;font-weight:400;color:#164ed8;letter-spacing:-0.453px;white-space:pre;-webkit-text-stroke:0.3px;">NYHS\DESKTOP-SPLLLT</span>
<div style="position:absolute;left:998px;top:426px;width:50px;height:32px;background:#ffe1e1;border-radius:16px"></div>
<span style="position:absolute;left:1018.99px;top:435.15px;font-family:'Liberation Sans', sans-serif;font-size:14px;line-height:14px;font-weight:400;color:#b42318;letter-spacing:0.219px;white-space:pre;">3</span>
<div style="position:absolute;left:1148px;top:426px;width:74px;height:32px;background:#feecac;border-radius:16px"></div>
<span style="position:absolute;left:1176.98px;top:435.15px;font-family:'Liberation Sans', sans-serif;font-size:14px;line-height:14px;font-weight:400;color:#963c0d;letter-spacing:0.227px;white-space:pre;">32</span>
<svg style="position:absolute;left:1297.5px;top:438.2px;" width="15" height="15" viewBox="0 0 15 15" fill="none"><g stroke="#69717d" stroke-width="0.8" stroke-linejoin="round" stroke-linecap="round"><path d="M7.4 0.9 L13.6 3.1 V7.0 L7.4 9.3 L1.2 7.0 V3.1 Z"/><path d="M1.2 3.1 L7.4 5.3 L13.6 3.1 M7.4 5.3 V9.3"/><path d="M7.4 9.3 V11.0"/><rect x="4.6" y="11.0" width="5.6" height="2.5" rx="1.2"/><path d="M1.2 12.3 H4.6 M10.2 12.3 H13.6"/></g></svg>
<span style="position:absolute;left:1338.20px;top:429.15px;font-family:'Liberation Sans', sans-serif;font-size:14px;line-height:14px;font-weight:400;color:#1f2328;letter-spacing:0.545px;white-space:pre;">Compute</span>
<span style="position:absolute;left:1338.20px;top:447.74px;font-family:'Liberation Sans', sans-serif;font-size:12px;line-height:12px;font-weight:400;color:#5b6470;letter-spacing:0.453px;white-space:pre;">Other Compute</span>
<span style="position:absolute;left:1338.20px;top:463.84px;font-family:'Liberation Sans', sans-serif;font-size:12px;line-height:12px;font-weight:400;color:#5b6470;letter-spacing:0.358px;white-space:pre;">Generic Network Node</span>
<svg style="position:absolute;left:1488px;top:431px;" width="20" height="20" viewBox="0 0 20 20" fill="none"><circle cx="10" cy="10" r="9" fill="#e30db8"/><path d="M8.6 4.9 A5.25 5.25 0 0 0 8.6 15.1" stroke="#fff" stroke-width="0.95" opacity=".85"/><rect x="9.05" y="0.5" width="0.8" height="19" fill="#fff"/><circle cx="9.95" cy="9.95" r="2.0" fill="#fff"/><circle cx="11.7" cy="5.3" r="0.8" fill="#fff"/><circle cx="14.8" cy="8.4" r="0.85" fill="#fff"/><circle cx="14.8" cy="11.5" r="0.85" fill="#fff"/><circle cx="11.7" cy="14.7" r="0.8" fill="#fff"/></svg>
<span style="position:absolute;left:1488.40px;top:460.15px;font-family:'Liberation Sans', sans-serif;font-size:14px;line-height:14px;font-weight:400;color:#4b5563;letter-spacing:0.093px;white-space:pre;">First Seen: 4 days ago</span>
<svg style="position:absolute;left:1640.4px;top:458.1px;" width="18" height="18" viewBox="0 0 18 18" fill="none"><circle cx="9" cy="9" r="8" stroke="#5b6470" stroke-width="0.95"/><path d="M7.80 7.80 H9.20 V13.00 M7.00 13.13 H11.27" stroke="#5b6470" stroke-width="0.95"/><circle cx="8.73" cy="5.00" r="1.00" fill="#5b6470"/></svg>
<span style="position:absolute;left:1488.40px;top:480.85px;font-family:'Liberation Sans', sans-serif;font-size:14px;line-height:14px;font-weight:400;color:#4b5563;letter-spacing:0.073px;white-space:pre;">Last Seen: a day ago</span>
<div style="position:absolute;left:1692.0px;top:427.1px;width:102.10000000000001px;height:23.2px;border:1px solid #dde1e6;border-radius:4px;background:#fff"></div>
<div style="position:absolute;left:1688.7px;top:426.8px;width:4.4px;height:22.2px;background:#2e3b47;border-radius:4px 0 0 4px"></div>
<span style="position:absolute;left:1700.50px;top:431.64px;font-family:'Liberation Sans', sans-serif;font-size:12px;line-height:12px;font-weight:700;color:#525c69;letter-spacing:0.136px;white-space:pre;">Claroty xDome</span>
<div style="position:absolute;left:337px;top:534px;width:1540px;height:110px;background:#fff;border:1px solid #eceef1;border-radius:10px;box-shadow:0 3px 8px -1px rgba(16,24,40,.09)"></div>
<span style="position:absolute;left:408.20px;top:556.15px;font-family:'Liberation Sans', sans-serif;font-size:14px;line-height:14px;font-weight:400;color:#164ed8;letter-spacing:0.131px;white-space:pre;-webkit-text-stroke:0.3px;">10.10.8.52</span>
<div style="position:absolute;left:998px;top:553px;width:50px;height:32px;background:#ffe1e1;border-radius:16px"></div>
<span style="position:absolute;left:1018.99px;top:562.15px;font-family:'Liberation Sans', sans-serif;font-size:14px;line-height:14px;font-weight:400;color:#b42318;letter-spacing:0.219px;white-space:pre;">3</span>
<div style="position:absolute;left:1148px;top:553px;width:74px;height:32px;background:#feecac;border-radius:16px"></div>
<span style="position:absolute;left:1176.98px;top:562.15px;font-family:'Liberation Sans', sans-serif;font-size:14px;line-height:14px;font-weight:400;color:#963c0d;letter-spacing:0.227px;white-space:pre;">31</span>
<svg style="position:absolute;left:1297.5px;top:565.2px;" width="15" height="15" viewBox="0 0 15 15" fill="none"><g stroke="#69717d" stroke-width="0.8" stroke-linejoin="round" stroke-linecap="round"><path d="M7.4 0.9 L13.6 3.1 V7.0 L7.4 9.3 L1.2 7.0 V3.1 Z"/><path d="M1.2 3.1 L7.4 5.3 L13.6 3.1 M7.4 5.3 V9.3"/><path d="M7.4 9.3 V11.0"/><rect x="4.6" y="11.0" width="5.6" height="2.5" rx="1.2"/><path d="M1.2 12.3 H4.6 M10.2 12.3 H13.6"/></g></svg>
<span style="position:absolute;left:1338.20px;top:556.15px;font-family:'Liberation Sans', sans-serif;font-size:14px;line-height:14px;font-weight:400;color:#1f2328;letter-spacing:0.545px;white-space:pre;">Compute</span>
<span style="position:absolute;left:1338.20px;top:574.74px;font-family:'Liberation Sans', sans-serif;font-size:12px;line-height:12px;font-weight:400;color:#5b6470;letter-spacing:0.453px;white-space:pre;">Other Compute</span>
<span style="position:absolute;left:1338.20px;top:590.84px;font-family:'Liberation Sans', sans-serif;font-size:12px;line-height:12px;font-weight:400;color:#5b6470;letter-spacing:0.358px;white-space:pre;">Generic Network Node</span>
<svg style="position:absolute;left:1488px;top:558px;" width="20" height="20" viewBox="0 0 20 20" fill="none"><circle cx="10" cy="10" r="9" fill="#e30db8"/><path d="M8.6 4.9 A5.25 5.25 0 0 0 8.6 15.1" stroke="#fff" stroke-width="0.95" opacity=".85"/><rect x="9.05" y="0.5" width="0.8" height="19" fill="#fff"/><circle cx="9.95" cy="9.95" r="2.0" fill="#fff"/><circle cx="11.7" cy="5.3" r="0.8" fill="#fff"/><circle cx="14.8" cy="8.4" r="0.85" fill="#fff"/><circle cx="14.8" cy="11.5" r="0.85" fill="#fff"/><circle cx="11.7" cy="14.7" r="0.8" fill="#fff"/></svg>
<span style="position:absolute;left:1488.40px;top:587.15px;font-family:'Liberation Sans', sans-serif;font-size:14px;line-height:14px;font-weight:400;color:#4b5563;letter-spacing:0.093px;white-space:pre;">First Seen: 4 days ago</span>
<svg style="position:absolute;left:1640.4px;top:585.1px;" width="18" height="18" viewBox="0 0 18 18" fill="none"><circle cx="9" cy="9" r="8" stroke="#5b6470" stroke-width="0.95"/><path d="M7.80 7.80 H9.20 V13.00 M7.00 13.13 H11.27" stroke="#5b6470" stroke-width="0.95"/><circle cx="8.73" cy="5.00" r="1.00" fill="#5b6470"/></svg>
<span style="position:absolute;left:1488.40px;top:607.85px;font-family:'Liberation Sans', sans-serif;font-size:14px;line-height:14px;font-weight:400;color:#4b5563;letter-spacing:0.073px;white-space:pre;">Last Seen: a day ago</span>
<div style="position:absolute;left:1692.0px;top:554.0999999999999px;width:102.10000000000001px;height:23.2px;border:1px solid #dde1e6;border-radius:4px;background:#fff"></div>
<div style="position:absolute;left:1688.7px;top:553.8px;width:4.4px;height:22.2px;background:#2e3b47;border-radius:4px 0 0 4px"></div>
<span style="position:absolute;left:1700.50px;top:558.64px;font-family:'Liberation Sans', sans-serif;font-size:12px;line-height:12px;font-weight:700;color:#525c69;letter-spacing:0.136px;white-space:pre;">Claroty xDome</span>
<div style="position:absolute;left:337px;top:661px;width:1540px;height:110px;background:#fff;border:1px solid #eceef1;border-radius:10px;box-shadow:0 3px 8px -1px rgba(16,24,40,.09)"></div>
<span style="position:absolute;left:408.20px;top:683.15px;font-family:'Liberation Sans', sans-serif;font-size:14px;line-height:14px;font-weight:400;color:#164ed8;letter-spacing:0.131px;white-space:pre;-webkit-text-stroke:0.3px;">10.10.10.3</span>
<div style="position:absolute;left:998px;top:680px;width:50px;height:32px;background:#ffe1e1;border-radius:16px"></div>
<span style="position:absolute;left:1018.99px;top:689.15px;font-family:'Liberation Sans', sans-serif;font-size:14px;line-height:14px;font-weight:400;color:#b42318;letter-spacing:0.219px;white-space:pre;">3</span>
<span style="position:absolute;left:1161.60px;top:684.75px;font-family:'Liberation Sans', sans-serif;font-size:14px;line-height:14px;font-weight:400;color:#555;letter-spacing:-0.156px;white-space:pre;">-</span>
<svg style="position:absolute;left:1297.5px;top:692.2px;" width="15" height="15" viewBox="0 0 15 15" fill="none"><g stroke="#69717d" stroke-width="0.8" stroke-linejoin="round" stroke-linecap="round"><path d="M7.4 0.9 L13.6 3.1 V7.0 L7.4 9.3 L1.2 7.0 V3.1 Z"/><path d="M1.2 3.1 L7.4 5.3 L13.6 3.1 M7.4 5.3 V9.3"/><path d="M7.4 9.3 V11.0"/><rect x="4.6" y="11.0" width="5.6" height="2.5" rx="1.2"/><path d="M1.2 12.3 H4.6 M10.2 12.3 H13.6"/></g></svg>
<span style="position:absolute;left:1338.20px;top:683.15px;font-family:'Liberation Sans', sans-serif;font-size:14px;line-height:14px;font-weight:400;color:#1f2328;letter-spacing:0.545px;white-space:pre;">Compute</span>
<span style="position:absolute;left:1338.20px;top:701.74px;font-family:'Liberation Sans', sans-serif;font-size:12px;line-height:12px;font-weight:400;color:#5b6470;letter-spacing:0.453px;white-space:pre;">Other Compute</span>
<span style="position:absolute;left:1338.20px;top:717.84px;font-family:'Liberation Sans', sans-serif;font-size:12px;line-height:12px;font-weight:400;color:#5b6470;letter-spacing:0.358px;white-space:pre;">Generic Network Node</span>
<svg style="position:absolute;left:1488px;top:685px;" width="20" height="20" viewBox="0 0 20 20" fill="none"><circle cx="10" cy="10" r="9" fill="#e30db8"/><path d="M8.6 4.9 A5.25 5.25 0 0 0 8.6 15.1" stroke="#fff" stroke-width="0.95" opacity=".85"/><rect x="9.05" y="0.5" width="0.8" height="19" fill="#fff"/><circle cx="9.95" cy="9.95" r="2.0" fill="#fff"/><circle cx="11.7" cy="5.3" r="0.8" fill="#fff"/><circle cx="14.8" cy="8.4" r="0.85" fill="#fff"/><circle cx="14.8" cy="11.5" r="0.85" fill="#fff"/><circle cx="11.7" cy="14.7" r="0.8" fill="#fff"/></svg>
<span style="position:absolute;left:1488.40px;top:714.15px;font-family:'Liberation Sans', sans-serif;font-size:14px;line-height:14px;font-weight:400;color:#4b5563;letter-spacing:0.093px;white-space:pre;">First Seen: 4 days ago</span>
<svg style="position:absolute;left:1640.4px;top:712.1px;" width="18" height="18" viewBox="0 0 18 18" fill="none"><circle cx="9" cy="9" r="8" stroke="#5b6470" stroke-width="0.95"/><path d="M7.80 7.80 H9.20 V13.00 M7.00 13.13 H11.27" stroke="#5b6470" stroke-width="0.95"/><circle cx="8.73" cy="5.00" r="1.00" fill="#5b6470"/></svg>
<span style="position:absolute;left:1488.40px;top:734.85px;font-family:'Liberation Sans', sans-serif;font-size:14px;line-height:14px;font-weight:400;color:#4b5563;letter-spacing:0.073px;white-space:pre;">Last Seen: a day ago</span>
<div style="position:absolute;left:1692.0px;top:681.0999999999999px;width:102.10000000000001px;height:23.2px;border:1px solid #dde1e6;border-radius:4px;background:#fff"></div>
<div style="position:absolute;left:1688.7px;top:680.8px;width:4.4px;height:22.2px;background:#2e3b47;border-radius:4px 0 0 4px"></div>
<span style="position:absolute;left:1700.50px;top:685.64px;font-family:'Liberation Sans', sans-serif;font-size:12px;line-height:12px;font-weight:700;color:#525c69;letter-spacing:0.136px;white-space:pre;">Claroty xDome</span>
<div style="position:absolute;left:337px;top:788px;width:1540px;height:110px;background:#fff;border:1px solid #eceef1;border-radius:10px;box-shadow:0 3px 8px -1px rgba(16,24,40,.09)"></div>
<span style="position:absolute;left:408.20px;top:810.15px;font-family:'Liberation Sans', sans-serif;font-size:14px;line-height:14px;font-weight:400;color:#164ed8;letter-spacing:-0.391px;white-space:pre;-webkit-text-stroke:0.3px;">EX43009E9F9C</span>
<div style="position:absolute;left:998px;top:807px;width:50px;height:32px;background:#ffe1e1;border-radius:16px"></div>
<span style="position:absolute;left:1018.99px;top:816.15px;font-family:'Liberation Sans', sans-serif;font-size:14px;line-height:14px;font-weight:400;color:#b42318;letter-spacing:0.219px;white-space:pre;">3</span>
<div style="position:absolute;left:1148px;top:807px;width:74px;height:32px;background:#feecac;border-radius:16px"></div>
<span style="position:absolute;left:1176.98px;top:816.15px;font-family:'Liberation Sans', sans-serif;font-size:14px;line-height:14px;font-weight:400;color:#963c0d;letter-spacing:0.227px;white-space:pre;">28</span>
<svg style="position:absolute;left:1297.5px;top:819.2px;" width="15" height="15" viewBox="0 0 15 15" fill="none"><g stroke="#69717d" stroke-width="0.8" stroke-linejoin="round" stroke-linecap="round"><path d="M7.4 0.9 L13.6 3.1 V7.0 L7.4 9.3 L1.2 7.0 V3.1 Z"/><path d="M1.2 3.1 L7.4 5.3 L13.6 3.1 M7.4 5.3 V9.3"/><path d="M7.4 9.3 V11.0"/><rect x="4.6" y="11.0" width="5.6" height="2.5" rx="1.2"/><path d="M1.2 12.3 H4.6 M10.2 12.3 H13.6"/></g></svg>
<span style="position:absolute;left:1338.20px;top:810.15px;font-family:'Liberation Sans', sans-serif;font-size:14px;line-height:14px;font-weight:400;color:#1f2328;letter-spacing:0.545px;white-space:pre;">Compute</span>
<span style="position:absolute;left:1338.20px;top:828.74px;font-family:'Liberation Sans', sans-serif;font-size:12px;line-height:12px;font-weight:400;color:#5b6470;letter-spacing:0.453px;white-space:pre;">Other Compute</span>
<span style="position:absolute;left:1338.20px;top:844.84px;font-family:'Liberation Sans', sans-serif;font-size:12px;line-height:12px;font-weight:400;color:#5b6470;letter-spacing:0.358px;white-space:pre;">Generic Network Node</span>
<svg style="position:absolute;left:1488px;top:812px;" width="20" height="20" viewBox="0 0 20 20" fill="none"><circle cx="10" cy="10" r="9" fill="#e30db8"/><path d="M8.6 4.9 A5.25 5.25 0 0 0 8.6 15.1" stroke="#fff" stroke-width="0.95" opacity=".85"/><rect x="9.05" y="0.5" width="0.8" height="19" fill="#fff"/><circle cx="9.95" cy="9.95" r="2.0" fill="#fff"/><circle cx="11.7" cy="5.3" r="0.8" fill="#fff"/><circle cx="14.8" cy="8.4" r="0.85" fill="#fff"/><circle cx="14.8" cy="11.5" r="0.85" fill="#fff"/><circle cx="11.7" cy="14.7" r="0.8" fill="#fff"/></svg>
<span style="position:absolute;left:1488.40px;top:841.15px;font-family:'Liberation Sans', sans-serif;font-size:14px;line-height:14px;font-weight:400;color:#4b5563;letter-spacing:0.093px;white-space:pre;">First Seen: 4 days ago</span>
<svg style="position:absolute;left:1640.4px;top:839.1px;" width="18" height="18" viewBox="0 0 18 18" fill="none"><circle cx="9" cy="9" r="8" stroke="#5b6470" stroke-width="0.95"/><path d="M7.80 7.80 H9.20 V13.00 M7.00 13.13 H11.27" stroke="#5b6470" stroke-width="0.95"/><circle cx="8.73" cy="5.00" r="1.00" fill="#5b6470"/></svg>
<span style="position:absolute;left:1488.40px;top:861.85px;font-family:'Liberation Sans', sans-serif;font-size:14px;line-height:14px;font-weight:400;color:#4b5563;letter-spacing:0.073px;white-space:pre;">Last Seen: a day ago</span>
<div style="position:absolute;left:1692.0px;top:808.0999999999999px;width:102.10000000000001px;height:23.2px;border:1px solid #dde1e6;border-radius:4px;background:#fff"></div>
<div style="position:absolute;left:1688.7px;top:807.8px;width:4.4px;height:22.2px;background:#2e3b47;border-radius:4px 0 0 4px"></div>
<span style="position:absolute;left:1700.50px;top:812.64px;font-family:'Liberation Sans', sans-serif;font-size:12px;line-height:12px;font-weight:700;color:#525c69;letter-spacing:0.136px;white-space:pre;">Claroty xDome</span>
<div style="position:absolute;left:337px;top:915px;width:1540px;height:110px;background:#fff;border:1px solid #eceef1;border-radius:10px;box-shadow:0 3px 8px -1px rgba(16,24,40,.09)"></div>
<span style="position:absolute;left:408.20px;top:937.15px;font-family:'Liberation Sans', sans-serif;font-size:14px;line-height:14px;font-weight:400;color:#164ed8;letter-spacing:0.139px;white-space:pre;-webkit-text-stroke:0.3px;">10.8.58.198</span>
<div style="position:absolute;left:998px;top:934px;width:50px;height:32px;background:#ffe1e1;border-radius:16px"></div>
<span style="position:absolute;left:1018.99px;top:943.15px;font-family:'Liberation Sans', sans-serif;font-size:14px;line-height:14px;font-weight:400;color:#b42318;letter-spacing:0.219px;white-space:pre;">3</span>
<div style="position:absolute;left:1148px;top:934px;width:74px;height:32px;background:#feecac;border-radius:16px"></div>
<span style="position:absolute;left:1176.98px;top:943.15px;font-family:'Liberation Sans', sans-serif;font-size:14px;line-height:14px;font-weight:400;color:#963c0d;letter-spacing:0.227px;white-space:pre;">31</span>
<svg style="position:absolute;left:1297.5px;top:946.2px;" width="15" height="15" viewBox="0 0 15 15" fill="none"><g stroke="#69717d" stroke-width="0.8" stroke-linejoin="round" stroke-linecap="round"><path d="M7.4 0.9 L13.6 3.1 V7.0 L7.4 9.3 L1.2 7.0 V3.1 Z"/><path d="M1.2 3.1 L7.4 5.3 L13.6 3.1 M7.4 5.3 V9.3"/><path d="M7.4 9.3 V11.0"/><rect x="4.6" y="11.0" width="5.6" height="2.5" rx="1.2"/><path d="M1.2 12.3 H4.6 M10.2 12.3 H13.6"/></g></svg>
<span style="position:absolute;left:1338.20px;top:937.15px;font-family:'Liberation Sans', sans-serif;font-size:14px;line-height:14px;font-weight:400;color:#1f2328;letter-spacing:0.545px;white-space:pre;">Compute</span>
<span style="position:absolute;left:1338.20px;top:955.74px;font-family:'Liberation Sans', sans-serif;font-size:12px;line-height:12px;font-weight:400;color:#5b6470;letter-spacing:0.453px;white-space:pre;">Other Compute</span>
<span style="position:absolute;left:1338.20px;top:971.84px;font-family:'Liberation Sans', sans-serif;font-size:12px;line-height:12px;font-weight:400;color:#5b6470;letter-spacing:0.358px;white-space:pre;">Generic Network Node</span>
<svg style="position:absolute;left:1488px;top:939px;" width="20" height="20" viewBox="0 0 20 20" fill="none"><circle cx="10" cy="10" r="9" fill="#e30db8"/><path d="M8.6 4.9 A5.25 5.25 0 0 0 8.6 15.1" stroke="#fff" stroke-width="0.95" opacity=".85"/><rect x="9.05" y="0.5" width="0.8" height="19" fill="#fff"/><circle cx="9.95" cy="9.95" r="2.0" fill="#fff"/><circle cx="11.7" cy="5.3" r="0.8" fill="#fff"/><circle cx="14.8" cy="8.4" r="0.85" fill="#fff"/><circle cx="14.8" cy="11.5" r="0.85" fill="#fff"/><circle cx="11.7" cy="14.7" r="0.8" fill="#fff"/></svg>
<span style="position:absolute;left:1488.40px;top:968.15px;font-family:'Liberation Sans', sans-serif;font-size:14px;line-height:14px;font-weight:400;color:#4b5563;letter-spacing:0.093px;white-space:pre;">First Seen: 4 days ago</span>
<svg style="position:absolute;left:1640.4px;top:966.1px;" width="18" height="18" viewBox="0 0 18 18" fill="none"><circle cx="9" cy="9" r="8" stroke="#5b6470" stroke-width="0.95"/><path d="M7.80 7.80 H9.20 V13.00 M7.00 13.13 H11.27" stroke="#5b6470" stroke-width="0.95"/><circle cx="8.73" cy="5.00" r="1.00" fill="#5b6470"/></svg>
<span style="position:absolute;left:1488.40px;top:988.85px;font-family:'Liberation Sans', sans-serif;font-size:14px;line-height:14px;font-weight:400;color:#4b5563;letter-spacing:0.073px;white-space:pre;">Last Seen: a day ago</span>
<div style="position:absolute;left:1692.0px;top:935.0999999999999px;width:102.10000000000001px;height:23.2px;border:1px solid #dde1e6;border-radius:4px;background:#fff"></div>
<div style="position:absolute;left:1688.7px;top:934.8px;width:4.4px;height:22.2px;background:#2e3b47;border-radius:4px 0 0 4px"></div>
<span style="position:absolute;left:1700.50px;top:939.64px;font-family:'Liberation Sans', sans-serif;font-size:12px;line-height:12px;font-weight:700;color:#525c69;letter-spacing:0.136px;white-space:pre;">Claroty xDome</span>
<div style="position:absolute;left:320px;top:961px;width:1538px;height:2px;background:#f1f2f5"></div>
<div style="position:absolute;left:0px;top:0px;width:1858px;height:6px;background:#fff"></div>
<div style="position:absolute;left:1690px;top:912px;width:120px;height:44px;background:#012d5a;border-radius:22px 22px 22px 8px;box-shadow:0 2px 5px rgba(0,0,0,.22)"></div>
<svg style="position:absolute;left:1703px;top:923px;" width="22" height="22" viewBox="0 0 22 22" fill="none"><circle cx="10.8" cy="10.9" r="10" fill="#fff"/></svg>
<span style="position:absolute;left:1711.61px;top:927.35px;font-family:'Liberation Sans', sans-serif;font-size:14px;line-height:14px;font-weight:700;color:#012d5a;letter-spacing:0.297px;white-space:pre;font-family:'Liberation Serif',serif;">i</span>
<span style="position:absolute;left:1731.00px;top:926.00px;font-family:'Liberation Sans', sans-serif;font-size:15px;line-height:15px;font-weight:400;color:#fff;letter-spacing:0.369px;white-space:pre;-webkit-text-stroke:0.3px;-webkit-text-stroke:0.45px;">Guide Me</span>
</div></body></html>
